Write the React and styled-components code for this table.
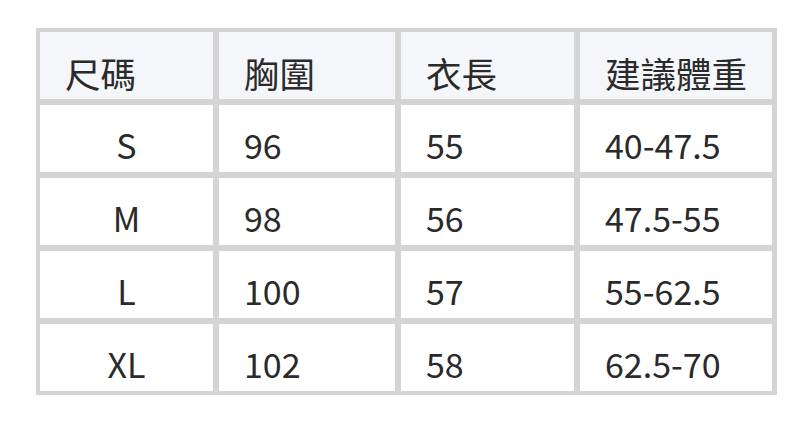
import React from 'react';
import styled, { createGlobalStyle } from 'styled-components';

const GlobalStyle = createGlobalStyle`
  html, body {
    margin: 0;
    padding: 0;
    background: #ffffff;
  }
  body {
    font-family: "Noto Sans CJK TC", "Noto Sans", sans-serif;
    color: #2a2a2a;
  }
`;

const headers = ['尺碼', '胸圍', '衣長', '建議體重'];

const rows = [
  ['S', '96', '55', '40-47.5'],
  ['M', '98', '56', '47.5-55'],
  ['L', '100', '57', '55-62.5'],
  ['XL', '102', '58', '62.5-70'],
];

export default function App() {
  return (
    <Page>
      <GlobalStyle />
      <Table>
        {headers.map((h) => (
          <HeadCell key={h}>{h}</HeadCell>
        ))}
        {rows.map((row) =>
          row.map((value, i) => (
            <Cell key={row[0] + i} $center={i === 0}>
              {value}
            </Cell>
          ))
        )}
      </Table>
    </Page>
  );
}

const Page = styled.div`
  width: 812px;
  height: 422px;
  padding: 28px 0 0 36px;
  box-sizing: border-box;
`;

const Table = styled.div`
  display: grid;
  grid-template-columns: 173px 176px 173px 192px;
  grid-auto-rows: 67px;
  gap: 6px;
  width: 741px;
  padding: 4px 5px 4px 4px;
  box-sizing: border-box;
  background: #d4d4d4;
`;

const HeadCell = styled.div`
  display: flex;
  align-items: flex-end;
  padding: 0 0 3px 25px;
  background: #f5f6fa;
  font-size: 35.5px;
  line-height: 1.3;
`;

const Cell = styled.div`
  display: flex;
  align-items: flex-end;
  justify-content: ${(p) => (p.$center ? 'center' : 'flex-start')};
  padding: ${(p) => (p.$center ? '0 0 5px 0' : '0 0 5px 25px')};
  background: #ffffff;
  font-size: 34px;
  line-height: 1.3;
`;
